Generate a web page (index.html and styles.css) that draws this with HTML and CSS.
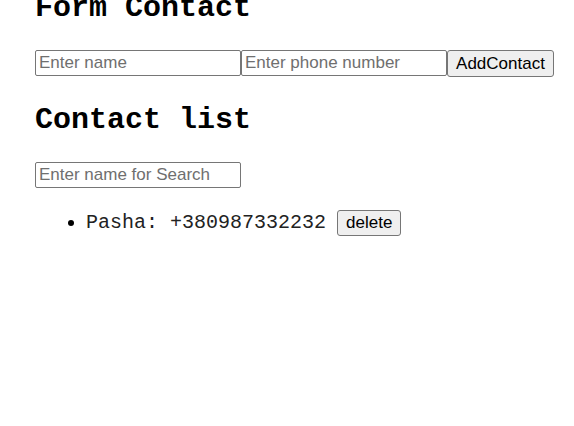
FILE: index.html
```html
<!DOCTYPE html>
<html lang="en">
<head>
  <meta charset="UTF-8" />
  <title>Phonebook</title>
  <link rel="stylesheet" href="styles.css">
</head>
<body>
  <div class="app">
    <h2 class="title first">Form Contact</h2>
    <form class="contact-form">
      <input class="field" type="text" placeholder="Enter name"><input class="field" type="tel" placeholder="Enter phone number"><button class="btn add" type="button">AddContact</button>
    </form>

    <h2 class="title">Contact list</h2>
    <input class="field search" type="text" placeholder="Enter name for Search">

    <ul class="contacts">
      <li class="contact"><span>Pasha: +380987332232</span><button class="btn delete" type="button">delete</button></li>
    </ul>
  </div>
</body>
</html>
```

FILE: styles.css
```css
body {
  margin: 0;
  background: #fff;
  color: #000;
  font-family: 'Liberation Mono', 'Courier New', monospace;
}

.app {
  padding-left: 35px;
}

.title {
  font-family: 'Liberation Mono', 'Courier New', monospace;
  font-size: 30px;
  font-weight: bold;
  line-height: 34px;
  margin: 26px 0 25px;
}

.title.first {
  margin-top: -9px;
}

.contact-form {
  display: flex;
  align-items: stretch;
  margin-bottom: 25px;
}

.field {
  box-sizing: border-box;
  width: 206px;
  height: 26px;
  margin: 0;
  padding: 1px 3px;
  border: 1px solid #767676;
  border-radius: 2px;
  font-family: 'Liberation Sans', Arial, sans-serif;
  font-size: 17px;
  color: #000;
  background: #fff;
}

.field::placeholder {
  color: #6f6f6f;
}

.btn {
  box-sizing: border-box;
  margin: 0;
  padding: 1px 8px;
  border: 1px solid #767676;
  border-radius: 3px;
  background: #efefef;
  color: #000;
  font-family: 'Liberation Sans', Arial, sans-serif;
  font-size: 17px;
}

.add {
  width: 107px;
  height: 27px;
}

.search {
  display: block;
}

.contacts {
  margin: 22px 0 0;
  padding-left: 51px;
  font-size: 20px;
}

.contact span {
  color: #222;
}

.delete {
  width: 64px;
  height: 26px;
  margin-left: 11px;
}
```
